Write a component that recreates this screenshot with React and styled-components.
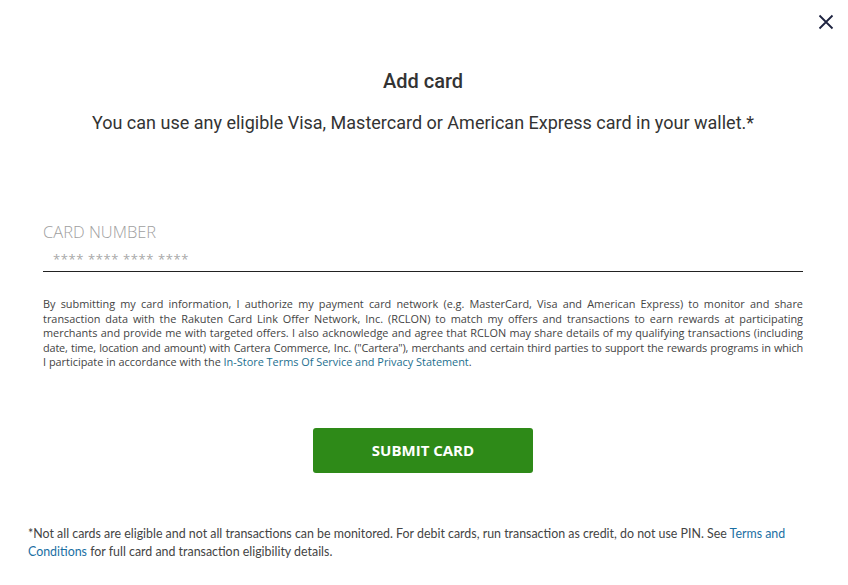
import React from "react";
import styled, { createGlobalStyle } from "styled-components";

const Global = createGlobalStyle`
  html, body { margin: 0; padding: 0; background: #fff; }
  body { font-family: "Lato", "Liberation Sans", sans-serif; color: #333; }
  * { box-sizing: border-box; }
`;

const Modal = styled.div`
  position: relative;
  width: 848px;
  height: 585px;
  padding: 68px 45px 0 43px;
  display: flex;
  flex-direction: column;
`;

const Close = styled.button`
  position: absolute;
  top: 13px;
  right: 13px;
  width: 18px;
  height: 18px;
  padding: 0;
  border: 0;
  background: transparent;
  display: flex;
  align-items: center;
  justify-content: center;
`;

const Title = styled.h1`
  margin: 0;
  text-align: center;
  font-family: "Roboto", sans-serif;
  font-weight: 500;
  font-size: 20px;
  line-height: 26px;
  color: #333;
`;

const Subtitle = styled.p`
  margin: 18px 0 0;
  text-align: center;
  font-family: "Roboto", sans-serif;
  font-size: 18px;
  line-height: 22px;
  color: #333;
`;

const Field = styled.div`
  margin-top: 87px;
  display: flex;
  flex-direction: column;
`;

const Label = styled.label`
  font-family: "Open Sans", sans-serif;
  font-weight: 300;
  font-size: 16.5px;
  line-height: 22px;
  color: #a0a0a0;
`;

const Input = styled.input`
  margin-top: 4px;
  border: 0;
  border-bottom: 1px solid #222;
  padding: 3px 10px 3px;
  font-family: "Open Sans", sans-serif;
  font-size: 13px;
  line-height: 18px;
  color: #999;
  outline: none;
  &::placeholder { color: #a8a8a8; letter-spacing: 0.6px; }
`;

const Disclaimer = styled.p`
  margin: 25px 0 0;
  font-family: "Open Sans", sans-serif;
  font-size: 10.9px;
  line-height: 14.5px;
  text-align: justify;
  color: #444;
`;

const Tight = styled.span`
  letter-spacing: -0.16px;
`;

const Link = styled.a`
  color: ${(p) => p.$tone || "#1c6f8f"};
  text-decoration: none;
`;

const Actions = styled.div`
  margin-top: 58px;
  display: flex;
  justify-content: center;
`;

const Submit = styled.button`
  width: 220px;
  height: 45px;
  border: 0;
  border-radius: 3px;
  background: #2e8a18;
  color: #fff;
  font-family: "Open Sans", sans-serif;
  font-weight: 700;
  font-size: 15px;
  letter-spacing: 0;
`;

const Footnote = styled.p`
  margin: 52px -15px 0 -15px;
  font-family: "Lato", sans-serif;
  font-size: 12.4px;
  line-height: 18.5px;
  color: #444;
`;

export default function App() {
  return (
    <>
      <Global />
      <Modal>
        <Close aria-label="Close">
          <svg width="16" height="16" viewBox="0 0 16 16">
            <path d="M1.5 1.5 L14.5 14.5 M14.5 1.5 L1.5 14.5" stroke="#1e2340" strokeWidth="1.8" fill="none" />
          </svg>
        </Close>
        <Title>Add card</Title>
        <Subtitle>You can use any eligible Visa, Mastercard or American Express card in your wallet.*</Subtitle>
        <Field>
          <Label>CARD NUMBER</Label>
          <Input placeholder="**** **** **** ****" />
        </Field>
        <Disclaimer>
          By submitting my card information, I authorize my payment card network (e.g. MasterCard, Visa and American Express) to monitor and share transaction data with the Rakuten Card Link Offer Network, Inc. (RCLON) to match my offers and transactions to earn rewards at participating merchants and provide me with targeted offers. I also acknowledge and agree that RCLON may share details of my qualifying transactions (including <Tight>date, time, location and amount) with Cartera Commerce, Inc. ("Cartera"), merchants and certain third parties to support the rewards programs in which</Tight> I{"\u00A0"}participate in accordance with the <Link href="#">In-Store Terms Of Service and Privacy Statement</Link>.
        </Disclaimer>
        <Actions>
          <Submit>SUBMIT CARD</Submit>
        </Actions>
        <Footnote>
          *Not all cards are eligible and not all transactions can be monitored. For debit cards, run transaction as credit, do not use PIN. See <Link href="#" $tone="#1a6fa3">Terms and Conditions</Link> for full card and transaction eligibility details.
        </Footnote>
      </Modal>
    </>
  );
}
